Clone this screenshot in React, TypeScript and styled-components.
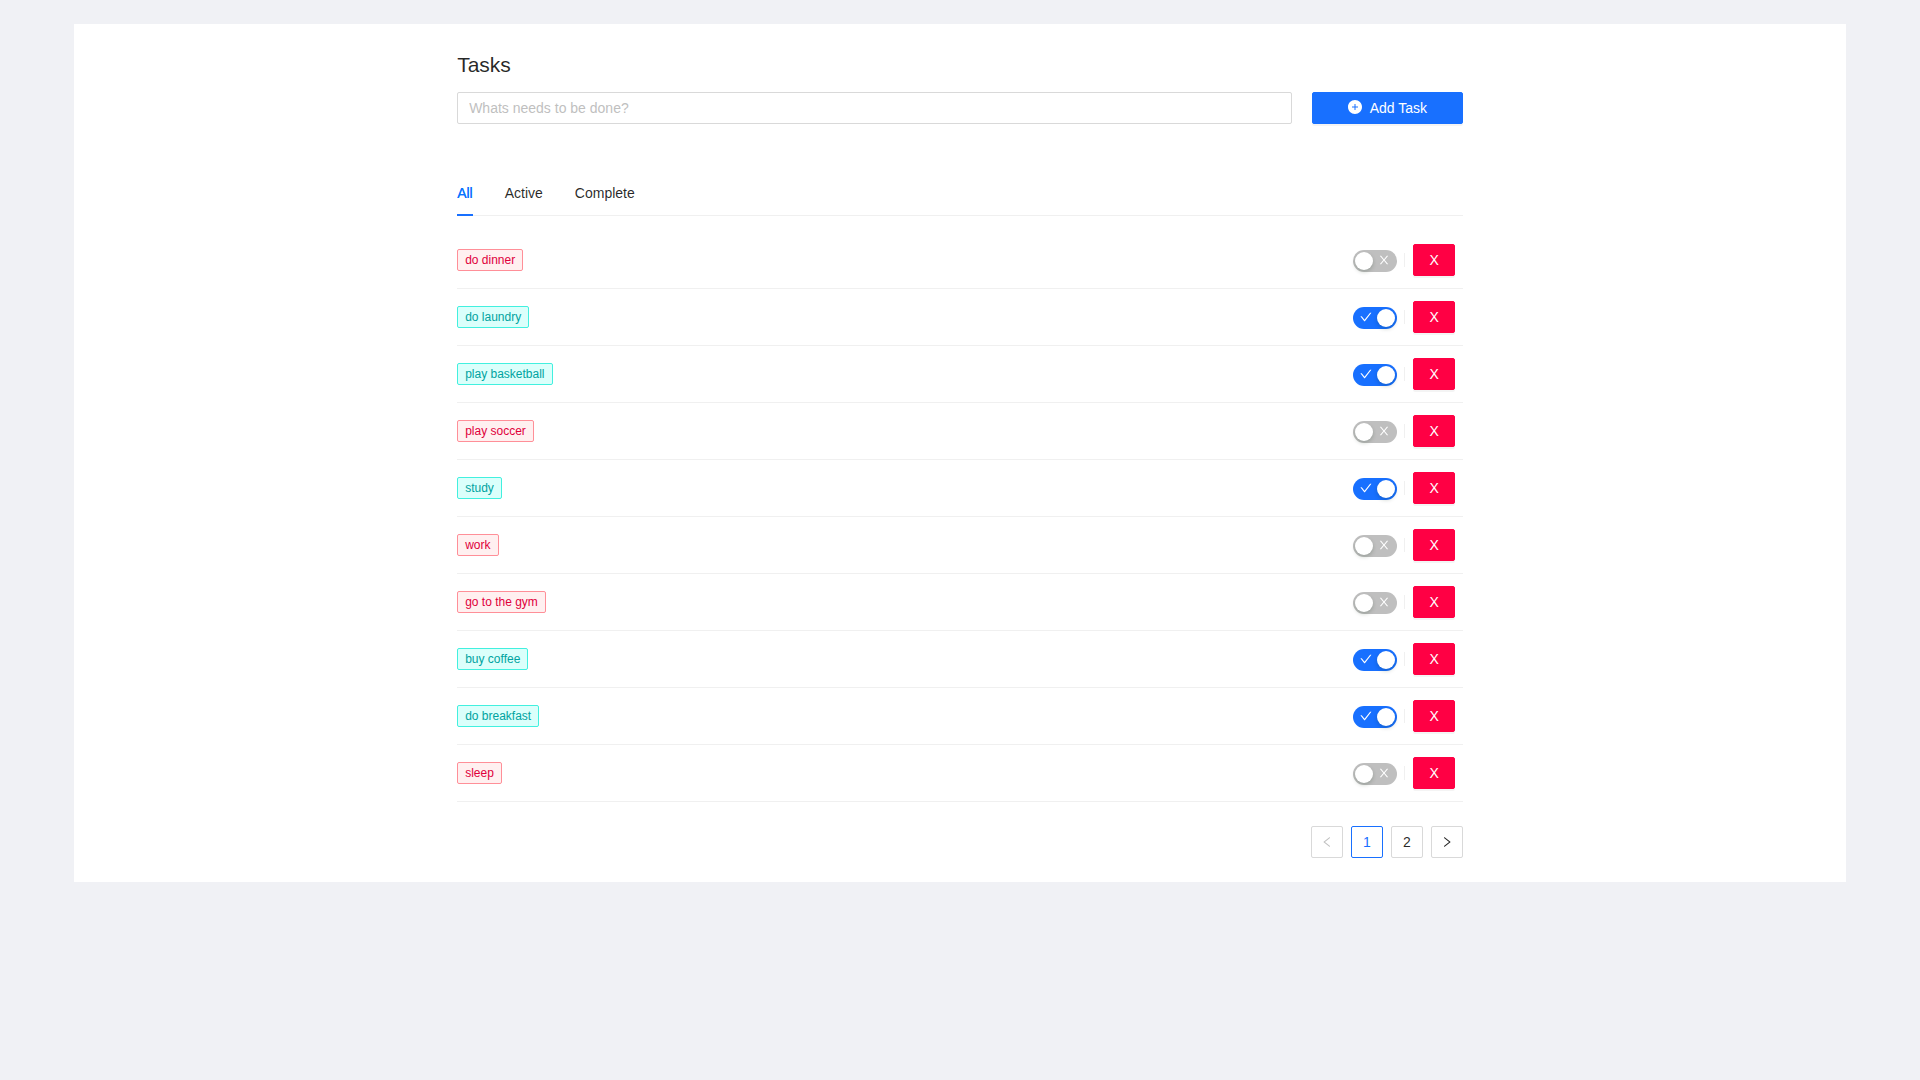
import React, { useState } from 'react';
import styled, { createGlobalStyle, css } from 'styled-components';

const GlobalStyle = createGlobalStyle`
  *, *::before, *::after { box-sizing: border-box; }
  body {
    margin: 0;
    background: #f0f1f5;
    color: rgba(0, 0, 0, 0.85);
    font-family: "Liberation Sans", Arial, sans-serif;
    font-size: 14px;
    line-height: 22px;
  }
  button, input { font: inherit; }
`;

const Page = styled.div`
  min-height: 100vh;
  padding: 24px 74px;
  background: #f0f1f5;
`;

const Panel = styled.main`
  display: grid;
  grid-template-columns: 5fr 14fr 5fr;
  padding: 24px;
  background: #fff;
`;

const Content = styled.div`
  grid-column: 2;
  min-width: 0;
`;

const Title = styled.h1`
  margin: 0 0 10px;
  font-size: 21px;
  font-weight: 400;
  line-height: 34px;
`;

const TaskForm = styled.form`
  display: grid;
  grid-template-columns: minmax(0, 1fr) 15%;
  gap: 20px;
  margin-bottom: 46px;
`;

const TaskInput = styled.input`
  width: 100%;
  height: 32px;
  padding: 4px 11px;
  border: 1px solid #d9d9d9;
  border-radius: 2px;
  background: #fff;
  color: inherit;
  outline: none;
  &::placeholder { color: #bfbfbf; opacity: 1; }
  &:focus { border-color: #1870ff; }
`;

const Button = styled.button<{ $danger?: boolean }>`
  display: flex;
  align-items: center;
  justify-content: center;
  gap: 8px;
  height: 32px;
  padding: 0 15px;
  border: 1px solid ${p => (p.$danger ? '#ff0044' : '#1870ff')};
  border-radius: 2px;
  background: ${p => (p.$danger ? '#ff0044' : '#1870ff')};
  color: #fff;
  box-shadow: 0 2px 0 rgba(0, 0, 0, 0.045);
  cursor: pointer;
`;

const Icon = styled.svg<{ $size: number }>`
  display: block;
  width: ${p => p.$size}px;
  height: ${p => p.$size}px;
  fill: currentColor;
`;

const AddIcon = styled(Icon)`
  margin-bottom: 2px;
`;

const Tabs = styled.div`
  display: flex;
  gap: 32px;
  height: 46px;
  margin-bottom: 16px;
  box-shadow: inset 0 -1px #f0f0f0;
`;

const Tab = styled.button<{ $active: boolean }>`
  padding: 12px 0 10px;
  border: 0;
  border-bottom: 2px solid ${p => (p.$active ? '#1870ff' : 'transparent')};
  background: none;
  color: ${p => (p.$active ? '#0a74ff' : 'inherit')};
  text-shadow: ${p => (p.$active ? '0 0 0.25px currentColor' : 'none')};
  cursor: pointer;
`;

const List = styled.ul`
  margin: 0 0 24px;
  padding: 0;
  list-style: none;
`;

const Row = styled.li`
  display: flex;
  align-items: center;
  justify-content: space-between;
  padding: 12px 0;
  border-bottom: 1px solid #f0f0f0;
`;

const Tag = styled.span<{ $done: boolean }>`
  padding: 0 7px;
  border: 1px solid;
  border-radius: 2px;
  font-size: 12px;
  line-height: 20px;
  ${p =>
    p.$done
      ? css`color: #00a3a0; background: #dbfffb; border-color: #42f0df;`
      : css`color: #e0003c; background: #fff0f0; border-color: #ff8f98;`}
`;

const Actions = styled.div`
  display: flex;
  align-items: center;
  padding-right: 8px;
`;

const Divider = styled.span`
  width: 1px;
  height: 14px;
  margin: 0 8px 0 7px;
  background: #f0f0f0;
`;

const Switch = styled.label<{ $on: boolean }>`
  display: flex;
  flex-direction: ${p => (p.$on ? 'row-reverse' : 'row')};
  align-items: center;
  justify-content: space-between;
  width: 44px;
  height: 22px;
  margin-top: 2px;
  padding: ${p => (p.$on ? '0 2px 0 7px' : '0 7px 0 2px')};
  border-radius: 11px;
  background: ${p => (p.$on ? '#1870ff' : '#bfbfbf')};
  color: #fff;
  cursor: pointer;
`;

const SwitchInput = styled.input`
  position: absolute;
  width: 1px;
  height: 1px;
  margin: 0;
  opacity: 0;
`;

const Knob = styled.span`
  width: 18px;
  height: 18px;
  border-radius: 9px;
  background: #fff;
  box-shadow: 0 2px 4px rgba(0, 35, 11, 0.2);
`;

const SwitchIcon = styled(Icon)`
  margin-bottom: 2px;
`;

const Pagination = styled.nav`
  display: flex;
  justify-content: flex-end;
  gap: 8px;
`;

const PageButton = styled.button<{ $active?: boolean }>`
  display: flex;
  align-items: center;
  justify-content: center;
  width: 32px;
  height: 32px;
  padding: 0;
  border: 1px solid ${p => (p.$active ? '#1870ff' : '#d9d9d9')};
  border-radius: 2px;
  background: #fff;
  color: ${p => (p.$active ? '#1870ff' : 'rgba(0, 0, 0, 0.85)')};
  cursor: pointer;
  &:disabled { color: rgba(0, 0, 0, 0.25); cursor: not-allowed; }
`;

const paths = {
  plus: 'M512 64C264.6 64 64 264.6 64 512s200.6 448 448 448 448-200.6 448-448S759.400 64 512 64zm192 472c0 4.400-3.600 8-8 8H544v152c0 4.400-3.600 8-8 8h-48c-4.400 0-8-3.600-8-8V544H328c-4.400 0-8-3.600-8-8v-48c0-4.400 3.600-8 8-8h152V328c0-4.400 3.600-8 8-8h48c4.400 0 8 3.600 8 8v152h152c4.400 0 8 3.600 8 8v48z',
  check: 'M912 190h-69.900c-9.800 0-19.100 4.500-25.100 12.200L404.700 724.500 207 474a32 32 0 00-25.100-12.200H112c-6.700 0-10.400 7.700-6.300 12.900l273.900 347c12.800 16.200 37.400 16.200 50.300 0l488.400-618.900c4.100-5.100.4-12.800-6.300-12.800z',
  close: 'M563.800 512l262.500-312.900c4.400-5.200.7-13.100-6.100-13.100h-79.800c-4.700 0-9.200 2.100-12.300 5.700L511.600 449.800 295.100 191.700c-3-3.600-7.500-5.700-12.300-5.700H203c-6.800 0-10.500 7.900-6.100 13.100L459.400 512 196.900 824.900A7.950 7.950 0 00203 838h79.800c4.700 0 9.200-2.100 12.300-5.700l216.500-258.100 216.500 258.100c3 3.600 7.500 5.700 12.300 5.700h79.800c6.800 0 10.500-7.900 6.100-13.100L563.800 512z',
  left: 'M724 218.300V141c0-6.700-7.700-10.400-12.900-6.300L260.300 486.800a31.860 31.860 0 000 50.300l450.800 352.100c5.300 4.100 12.900.4 12.900-6.300v-77.300c0-4.900-2.300-9.600-6.100-12.600l-360-281 360-281.100c3.800-3 6.100-7.700 6.100-12.600z',
  right: 'M765.700 486.800L314.900 134.700A7.970 7.970 0 00302 141v77.300c0 4.900 2.300 9.600 6.100 12.600l360 281.100-360 281.100c-3.900 3-6.100 7.700-6.100 12.600V883c0 6.700 7.700 10.400 12.900 6.300l450.800-352.100a31.960 31.960 0 000-50.400z',
};

interface Task {
  name: string;
  done: boolean;
}

const initialTasks: Task[] = [
  { name: 'do dinner', done: false },
  { name: 'do laundry', done: true },
  { name: 'play basketball', done: true },
  { name: 'play soccer', done: false },
  { name: 'study', done: true },
  { name: 'work', done: false },
  { name: 'go to the gym', done: false },
  { name: 'buy coffee', done: true },
  { name: 'do breakfast', done: true },
  { name: 'sleep', done: false },
];

const filters = ['All', 'Active', 'Complete'];

export default function App() {
  const [tasks, setTasks] = useState(initialTasks);
  const [filter, setFilter] = useState('All');
  const [draft, setDraft] = useState('');

  const toggle = (task: Task) =>
    setTasks(tasks.map(t => (t === task ? { ...t, done: !t.done } : t)));

  const add = (event: React.FormEvent) => {
    event.preventDefault();
    if (!draft.trim()) return;
    setTasks([{ name: draft.trim(), done: false }, ...tasks]);
    setDraft('');
  };

  const visible = tasks.filter(t => filter === 'All' || t.done === (filter === 'Complete'));

  return (
    <Page>
      <GlobalStyle />
      <Panel>
        <Content>
          <Title>Tasks</Title>
          <TaskForm onSubmit={add}>
            <TaskInput
              aria-label="New task"
              placeholder="Whats needs to be done?"
              value={draft}
              onChange={e => setDraft(e.target.value)}
            />
            <Button type="submit">
              <AddIcon $size={14} viewBox="64 64 896 896" aria-hidden="true"><path d={paths.plus} /></AddIcon>
              Add Task
            </Button>
          </TaskForm>
          <Tabs role="tablist">
            {filters.map(f => (
              <Tab key={f} type="button" role="tab" aria-selected={f === filter} $active={f === filter} onClick={() => setFilter(f)}>
                {f}
              </Tab>
            ))}
          </Tabs>
          <List>
            {visible.map(task => (
              <Row key={task.name}>
                <Tag $done={task.done}>{task.name}</Tag>
                <Actions>
                  <Switch $on={task.done}>
                    <SwitchInput
                      type="checkbox"
                      role="switch"
                      aria-label={`Complete ${task.name}`}
                      checked={task.done}
                      onChange={() => toggle(task)}
                    />
                    <Knob />
                    <SwitchIcon $size={12} viewBox="64 64 896 896" aria-hidden="true">
                      <path d={task.done ? paths.check : paths.close} />
                    </SwitchIcon>
                  </Switch>
                  <Divider />
                  <Button
                    $danger
                    type="button"
                    aria-label={`X, remove ${task.name}`}
                    onClick={() => setTasks(tasks.filter(t => t !== task))}
                  >
                    X
                  </Button>
                </Actions>
              </Row>
            ))}
          </List>
          <Pagination aria-label="Pages">
            <PageButton type="button" disabled aria-label="Previous page">
              <Icon $size={12} viewBox="64 64 896 896" aria-hidden="true"><path d={paths.left} /></Icon>
            </PageButton>
            <PageButton type="button" $active aria-current="page">1</PageButton>
            <PageButton type="button">2</PageButton>
            <PageButton type="button" aria-label="Next page">
              <Icon $size={12} viewBox="64 64 896 896" aria-hidden="true"><path d={paths.right} /></Icon>
            </PageButton>
          </Pagination>
        </Content>
      </Panel>
    </Page>
  );
}
